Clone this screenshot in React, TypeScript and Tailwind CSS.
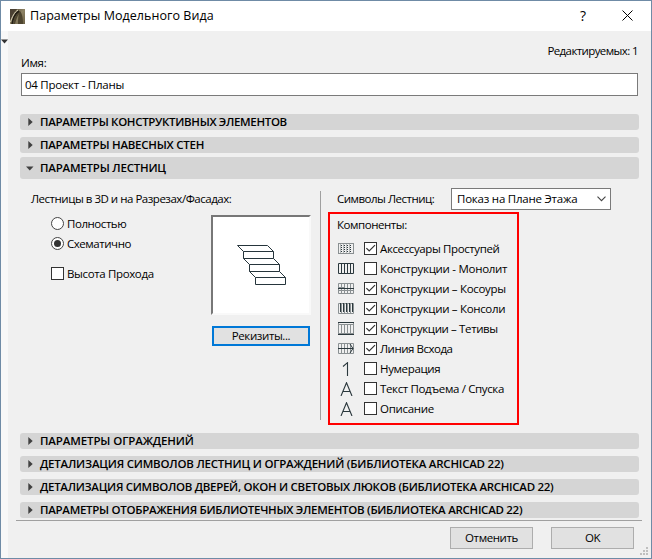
import React from "react";

const font = "font-['Open_Sans','Noto_Sans',sans-serif]";

function Section({ title, ls, open = false, className = "" }: { title: string; ls: string; open?: boolean; className?: string }) {
  return (
    <div className={`flex shrink-0 items-center rounded-[3px] bg-[#d5d5d5] ${open ? "h-[22px]" : "h-4"} ${className}`}>
      <span className="flex w-5 justify-center">
        {open ? (
          <svg width="8" height="5" viewBox="0 0 8 5" className="-ml-px"><path d="M0 0.5H7.5L3.75 4.5Z" fill="#404040" /></svg>
        ) : (
          <svg width="5" height="8" viewBox="0 0 5 8"><path d="M0.3 0V8L4.7 4Z" fill="#404040" /></svg>
        )}
      </span>
      <span className={`whitespace-nowrap text-[11.5px] leading-4 font-semibold text-black ${ls}`}>{title}</span>
    </div>
  );
}

function Check({ on = false }: { on?: boolean }) {
  return (
    <svg width="13" height="13" viewBox="0 0 13 13" className="mb-px shrink-0">
      <rect x="0.5" y="0.5" width="12" height="12" fill="#fff" stroke="#333" />
      {on && <path d="M2.4 6.2L5.2 9L11 3.2" fill="none" stroke="#333" strokeWidth="1.2" />}
    </svg>
  );
}

function Radio({ on = false }: { on?: boolean }) {
  return (
    <svg width="13" height="13" viewBox="0 0 13 13" className="mb-px shrink-0">
      <circle cx="6.5" cy="6.5" r="6" fill="#fff" stroke="#444" />
      {on && <circle cx="6.5" cy="6.5" r="3.5" fill="#333" />}
    </svg>
  );
}

function Icon({ kind }: { kind: string }) {
  const g = "#8a9092";
  const d = "#2b383d";
  return (
    <svg width="16" height="14" viewBox="0 0 16 14" fill="none" className="shrink-0">
      {kind === "tread" && (
        <>
          <rect x="0.5" y="1.5" width="15" height="10" stroke={g} />
          <path d="M3.5 3V11M6.5 3V11M9.5 3V11M12.5 3V11" stroke={d} strokeDasharray="1 1" />
          <path d="M2.5 2V11M5.5 2V11M8.5 2V11M11.5 2V11" stroke="#b4b8b9" />
        </>
      )}
      {kind === "mono" && (
        <>
          <path d="M0.5 1.5H15.5V11.5H0.5Z" stroke={d} />
          <path d="M3.5 2V11M6.5 2V11M9.5 2V11M12.5 2V11" stroke={d} />
        </>
      )}
      {kind === "stringer" && (
        <>
          <path d="M0.5 1.5H15.5V11.5H0.5ZM3.5 2V11M6.5 2V11M9.5 2V11M12.5 2V11M0 5.5H7M0 8.5H16" stroke={g} />
          <path d="M0 6.5H16" stroke={d} />
        </>
      )}
      {kind === "cantilever" && (
        <>
          <path d="M0.5 1.5H15.5V11.5H0.5ZM3.5 2V11M6.5 2V11M9.5 2V11M12.5 2V11" stroke={g} />
          <path d="M2.5 1V10M5.5 1V10M8.5 1V10M11.5 1V10M14.5 1V10" stroke={d} />
        </>
      )}
      {kind === "closed" && (
        <>
          <path d="M0.5 1V13M3.5 3V11M6.5 3V11M9.5 3V11M12.5 3V11M15.5 1V13M0 2.5H16M0 11.5H16" stroke={g} />
          <path d="M0 0.5H16M0 12.5H16" stroke={d} />
        </>
      )}
      {kind === "line" && (
        <>
          <path d="M0.5 1.5H15.5V11.5H0.5ZM3.5 2V11M6.5 2V11M9.5 2V11M12.5 2V11" stroke={g} />
          <path d="M0 6.5H15M12 2L15 6.5L12 11" stroke={d} />
        </>
      )}
      {kind === "one" && <path d="M5 4.5L9.5 0.7V14" stroke={d} strokeWidth="1.1" />}
      {kind === "text" && <path d="M3 14L8.5 0.7L14 14M4.7 9.5H12.3" stroke={d} strokeWidth="1.1" />}
    </svg>
  );
}

const rows = [
  { k: "tread", t: "Аксессуары Проступей", on: true, ls: "tracking-[-0.38px]" },
  { k: "mono", t: "Конструкции - Монолит", on: false, ls: "tracking-[-0.28px]" },
  { k: "stringer", t: "Конструкции – Косоуры", on: true, ls: "tracking-[-0.32px]" },
  { k: "cantilever", t: "Конструкции – Консоли", on: true, ls: "tracking-[-0.32px]" },
  { k: "closed", t: "Конструкции – Тетивы", on: true, ls: "tracking-[-0.38px]" },
  { k: "line", t: "Линия Всхода", on: true, ls: "tracking-[-0.48px]" },
  { k: "one", t: "Нумерация", on: false, ls: "tracking-[-0.35px]" },
  { k: "text", t: "Текст Подъема / Спуска", on: false, ls: "tracking-[-0.36px]" },
  { k: "text", t: "Описание", on: false, ls: "tracking-[-0.3px]" },
];

export default function App() {
  return (
    <div className={`flex h-[559px] w-[652px] flex-col overflow-hidden border border-[#6f8ba6] bg-[#f0f0f0] text-[11.5px] leading-4 whitespace-nowrap text-black ${font}`}>
      <header className="flex h-[30px] shrink-0 items-center bg-white pb-px pl-[9px]">
        <svg width="15" height="15" viewBox="0 0 15 15" className="mt-px">
          <defs>
            <linearGradient id="logo" x1="0" y1="0" x2="1" y2="1">
              <stop offset="0" stopColor="#4a4030" /><stop offset="0.5" stopColor="#8d8264" /><stop offset="1" stopColor="#6b6046" />
            </linearGradient>
          </defs>
          <rect width="15" height="15" fill="url(#logo)" />
          <path d="M0 0H7C4 3 2 8 0 12Z" fill="#4a4032" />
          <path d="M3 15C4 9 7 3 10 2C12 4 13 9 13 15H8C8 11 8 8 9 5C7 8 6 11 5 15Z" fill="#4d442f" />
          <path d="M2 15C3 9 6 4 9 2" fill="none" stroke="#221d14" strokeWidth="1.6" />
          <path d="M0.5 13C2 8 4.5 3 8 1" fill="none" stroke="#d8d1b8" />
        </svg>
        <span className="ml-[5px] text-[12.5px] tracking-[0.05px]">Параметры Модельного Вида</span>
        <span className="ml-auto text-[14px]">?</span>
        <svg width="11" height="11" viewBox="0 0 11 11" className="mr-[18px] ml-[36px]"><path d="M0.5 0.5L10.5 10.5M10.5 0.5L0.5 10.5" stroke="#000" /></svg>
      </header>
      <div className="flex min-h-0 flex-1">
        <aside className="w-[7px] shrink-0 bg-[#f8f8f8] pt-2">
          <svg width="7" height="5" viewBox="0 0 7 5"><path d="M0 0.5H7L3.5 4.5Z" fill="#333" /></svg>
        </aside>
        <main className="relative flex w-[643px] flex-col">
          <div className="mt-3 flex justify-end pr-[13px]"><span className="tracking-[-0.6px]">Редактируемых: 1</span></div>
          <div className="-mt-1 pl-[13px] tracking-[-0.3px]">Имя:</div>
          <div className="mt-[2px] ml-[13px] flex h-[23px] w-[617px] items-center border border-[#7a7a7a] bg-white pl-[3px] tracking-[-0.26px]">04 Проект - Планы</div>
          <div className="mt-[18px] ml-3 flex w-[619px] flex-col self-start">
            <Section title="ПАРАМЕТРЫ КОНСТРУКТИВНЫХ ЭЛЕМЕНТОВ" ls="tracking-[-0.33px]" />
            <Section title="ПАРАМЕТРЫ НАВЕСНЫХ СТЕН" ls="tracking-[-0.24px]" className="mt-[7px]" />
            <Section title="ПАРАМЕТРЫ ЛЕСТНИЦ" ls="tracking-[-0.21px]" open className="mt-1" />
          </div>
          <div className="flex h-[254px] shrink-0">
            <section className="w-[312px] pt-3 pl-[23px]">
              <div className="tracking-[-0.48px]">Лестницы в 3D и на Разрезах/Фасадах:</div>
              <div className="flex pt-[8px]">
                <div className="-mt-px w-[180px] pl-[20px]">
                  <div className="flex h-5 items-center gap-[3px]"><Radio /><span className="tracking-[-0.45px]">Полностью</span></div>
                  <div className="flex h-5 items-center gap-[3px]"><Radio on /><span className="tracking-[-0.45px]">Схематично</span></div>
                  <div className="mt-[10px] flex h-5 items-center gap-[3px]"><Check /><span className="tracking-[-0.36px]">Высота Прохода</span></div>
                </div>
                <div>
                  <div className="h-[100px] w-[100px] border-2 border-t-[#777] border-r-[#f9f9f9] border-b-[#f9f9f9] border-l-[#777] bg-white">
                    <svg width="95" height="96" viewBox="0 0 95 96" fill="none" stroke="#26353c">
                      <path d="M24.5 28.5H54.5L60.5 34.5H30.5ZM30.5 34.5V41.5H60.5V34.5M30.5 41.5L36.5 47.5H66.5L60.5 41.5M36.5 47.5V54.5H66.5V47.5M36.5 54.5L42.5 60.5H72.5L66.5 54.5M42.5 60.5V67.5H72.5V60.5" />
                    </svg>
                  </div>
                  <button className="mt-[11px] ml-px flex h-5 w-[98px] items-center justify-center border-2 border-[#0078d7] bg-[#e1e1e1] tracking-[-0.4px]">Рекизиты...</button>
                </div>
              </div>
            </section>
            <section className="mt-3 h-[229px] border-l border-[#a0a0a0] pl-[7px]">
              <div className="-mt-[3px] flex h-[22px] items-center">
                <span className="ml-[9px] w-[114px] tracking-[-0.5px]">Символы Лестниц:</span>
                <div className="flex h-[22px] w-40 items-center justify-between border border-[#7a7a7a] bg-white pr-1 pl-[5px]">
                  <span className="tracking-[-0.22px]">Показ на Плане Этажа</span>
                  <svg width="9" height="6" viewBox="0 0 9 6"><path d="M0.5 0.7L4.5 4.7L8.5 0.7" fill="none" stroke="#444" strokeWidth="1.1" /></svg>
                </div>
              </div>
              <div className="mt-[2px] h-[213px] w-[191px] border-2 border-[#ff0000] pt-[3px] pl-[8px]">
                <div className="-ml-px tracking-[-0.45px]">Компоненты:</div>
                <div className="mt-[6px]">
                  {rows.map((r) => (
                    <div key={r.t} className="flex h-5 items-center">
                      <Icon kind={r.k} />
                      <span className="ml-[10px] flex"><Check on={r.on} /></span>
                      <span className={`ml-[3px] ${r.ls}`}>{r.t}</span>
                    </div>
                  ))}
                </div>
              </div>
            </section>
          </div>
          <div className="ml-3 flex w-[619px] flex-col gap-[7px]">
            <Section title="ПАРАМЕТРЫ ОГРАЖДЕНИЙ" ls="tracking-[-0.12px]" />
            <Section title="ДЕТАЛИЗАЦИЯ СИМВОЛОВ ЛЕСТНИЦ И ОГРАЖДЕНИЙ (БИБЛИОТЕКА ARCHICAD 22)" ls="tracking-[-0.21px]" />
            <Section title="ДЕТАЛИЗАЦИЯ СИМВОЛОВ ДВЕРЕЙ, ОКОН И СВЕТОВЫХ ЛЮКОВ (БИБЛИОТЕКА ARCHICAD 22)" ls="tracking-[-0.29px]" />
            <Section title="ПАРАМЕТРЫ ОТОБРАЖЕНИЯ БИБЛИОТЕЧНЫХ ЭЛЕМЕНТОВ (БИБЛИОТЕКА ARCHICAD 22)" ls="tracking-[-0.28px]" />
          </div>
          <div className="mt-[2px] ml-2 w-[626px] border-t border-[#a0a0a0]" />
          <footer className="mt-[6px] flex justify-end gap-[18px] pr-[17px]">
            <button className="h-[22px] w-[83px] border border-[#adadad] bg-[#e1e1e1] tracking-[-0.4px]">Отменить</button>
            <button className="h-[22px] w-[83px] border border-[#adadad] bg-[#e1e1e1] tracking-[-0.4px]">OK</button>
          </footer>
          <svg width="8" height="8" viewBox="0 0 8 8" className="absolute right-[3px] bottom-[3px]" fill="#bfbfbf">
            <path d="M6 0h2v2H6zM3 3h2v2H3zM6 3h2v2H6zM0 6h2v2H0zM3 6h2v2H3zM6 6h2v2H6z" />
          </svg>
        </main>
      </div>
    </div>
  );
}
